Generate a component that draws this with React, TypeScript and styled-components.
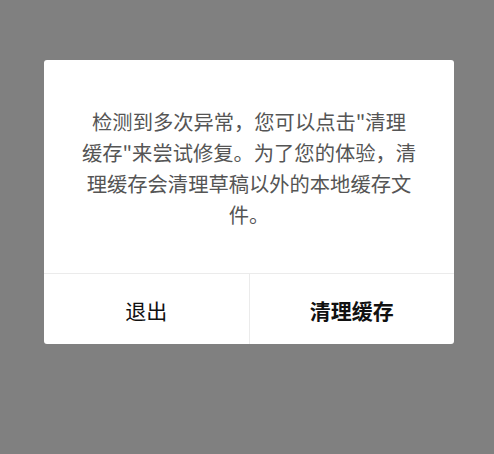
import styled, { createGlobalStyle } from "styled-components";

const GlobalStyle = createGlobalStyle`
  html, body {
    margin: 0;
    padding: 0;
    background: #808080;
  }
  body {
    font-family: "Noto Sans CJK SC", "Noto Sans", sans-serif;
  }
`;

const Overlay = styled.div`
  width: 494px;
  height: 454px;
  background: #808080;
  padding: 60px 40px 0 44px;
  box-sizing: border-box;
`;

const Dialog = styled.div`
  width: 410px;
  height: 284px;
  background: #ffffff;
  border-radius: 3px;
  display: flex;
  flex-direction: column;
  overflow: hidden;
`;

const Message = styled.div`
  flex: 1;
  padding: 46px 20px 0;
  font-size: 20.3px;
  line-height: 31px;
  color: #555555;
  text-align: center;
  white-space: nowrap;
`;

const Actions = styled.div`
  height: 70px;
  display: flex;
  border-top: 1px solid #ebebeb;
`;

const ActionButton = styled.button<{ $primary?: boolean }>`
  flex: 1;
  border: none;
  background: transparent;
  font-family: "Noto Sans CJK SC", "Noto Sans", sans-serif;
  font-size: 21px;
  font-weight: ${(props) => (props.$primary ? 700 : 400)};
  color: #111111;
  padding: 2px 0 0;
  cursor: pointer;

  & + & {
    border-left: 1px solid #ebebeb;
  }
`;

export default function App() {
  return (
    <>
      <GlobalStyle />
      <Overlay>
        <Dialog>
          <Message>
            检测到多次异常，您可以点击"清理
            <br />
            缓存"来尝试修复。为了您的体验，清
            <br />
            理缓存会清理草稿以外的本地缓存文
            <br />
            件。
          </Message>
          <Actions>
            <ActionButton>退出</ActionButton>
            <ActionButton $primary>清理缓存</ActionButton>
          </Actions>
        </Dialog>
      </Overlay>
    </>
  );
}
